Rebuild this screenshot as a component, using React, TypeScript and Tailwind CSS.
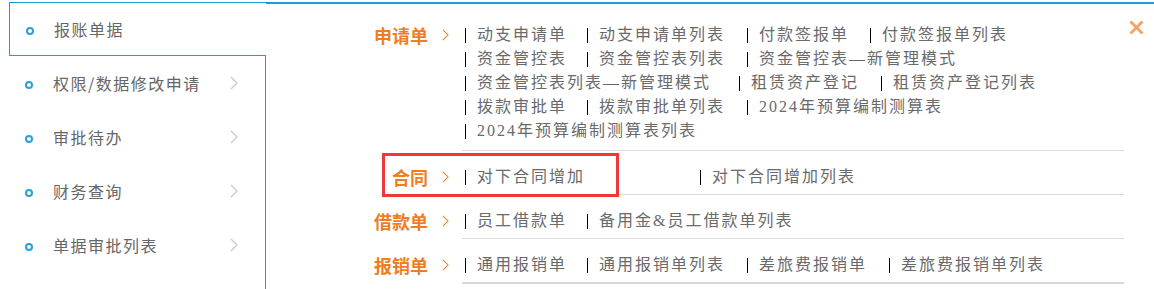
import React from "react";

const BLUE = "#1f9dd6";

const sideItems = ["报账单据", "权限/数据修改申请", "审批待办", "财务查询", "单据审批列表"];

type Section = { label: string; rows: { text: string; mr?: number }[][] };

const sections: Section[] = [
  {
    label: "申请单",
    rows: [
      [{ text: "动支申请单" }, { text: "动支申请单列表", mr: 22 }, { text: "付款签报单", mr: 21 }, { text: "付款签报单列表" }],
      [{ text: "资金管控表" }, { text: "资金管控表列表", mr: 22 }, { text: "资金管控表—新管理模式" }],
      [{ text: "资金管控表列表—新管理模式", mr: 28 }, { text: "租赁资产登记", mr: 22 }, { text: "租赁资产登记列表" }],
      [{ text: "拨款审批单" }, { text: "拨款审批单列表", mr: 22 }, { text: "2024年预算编制测算表" }],
      [{ text: "2024年预算编制测算表列表" }],
    ],
  },
  {
    label: "合同",
    rows: [[{ text: "对下合同增加", mr: 115 }, { text: "对下合同增加列表" }]],
  },
  {
    label: "借款单",
    rows: [[{ text: "员工借款单" }, { text: "备用金&员工借款单列表" }]],
  },
  {
    label: "报销单",
    rows: [[{ text: "通用报销单" }, { text: "通用报销单列表", mr: 22 }, { text: "差旅费报销单", mr: 22 }, { text: "差旅费报销单列表" }]],
  },
];

function Chevron({ color, className }: { color: string; className?: string }) {
  return (
    <svg width="8" height="14" viewBox="0 0 8 14" className={className}>
      <polyline points="1,1 7,7 1,13" fill="none" stroke={color} strokeWidth="1.2" />
    </svg>
  );
}

function Dot() {
  return <span className="block h-[8px] w-[8px] rounded-full border-[2.5px] border-[#2a9fd6] bg-white" />;
}

function SideItem({ text, active }: { text: string; active?: boolean }) {
  return (
    <div className="flex h-[54px] items-center">
      <div className="ml-[16px] mt-[3px]">
        <Dot />
      </div>
      <span className="ml-[20px] text-[16px] tracking-[1.5px] text-[#666]">{text}</span>
      {!active && <Chevron color="#c8c8c8" className="ml-auto mr-[27px]" />}
    </div>
  );
}

export default function App() {
  return (
    <div
      className="relative h-[289px] w-[1154px] overflow-hidden bg-white pt-[2px] pl-[9px]"
      style={{ fontFamily: '"Noto Sans CJK SC", sans-serif' }}
    >
      <div className="flex h-full">
        <aside className="flex w-[257px] flex-col">
          <div className="h-[54px] border border-r-0 border-[#1f9dd6]">
            <div className="-mt-px">
              <SideItem text={sideItems[0]} active />
            </div>
          </div>
          <div className="flex-1 border-r border-[#1f9dd6]">
            {sideItems.slice(1).map((t) => (
              <SideItem key={t} text={t} />
            ))}
          </div>
        </aside>

        <main className="flex-1 border-t-2" style={{ borderColor: BLUE }}>
          {sections.map((s, i) => (
            <div key={s.label} className="flex">
              <div
                className={`flex w-[196px] shrink-0 items-start justify-end pr-[13px] ${
                  i === 0 ? "pt-[19px]" : "pt-[14px]"
                }`}
              >
                <div className="flex h-[24px] items-center">
                  <span className="text-[18px] leading-none font-bold text-[#f07d1f]">{s.label}</span>
                  <Chevron color="#f07d1f" className="ml-[14px] h-[12px] w-[7px]" />
                </div>
              </div>
              <div
                className={`mr-[30px] flex-1 ${
                  i === 0 ? "pt-[19px] pb-[7px]" : "pt-[14px] pb-[5px]"
                } ${i === sections.length - 1 ? "border-b-2 border-[#d9d9d9]" : "border-b border-[#dadada]"}`}
              >
                {s.rows.map((row, ri) => (
                  <div key={ri} className="flex h-[24px] items-center pl-[3px]">
                    {row.map((it) => (
                      <span
                        key={it.text}
                        className="flex items-center"
                        style={{ marginRight: it.mr ?? 20 }}
                      >
                        <span className="h-[15px] w-px bg-black" />
                        <span
                          className="ml-[11px] text-[16px] leading-none tracking-[2px] text-[#6a6a6a]"
                          style={{ fontFamily: '"Liberation Serif", "Noto Sans CJK SC", serif' }}
                        >
                          {it.text}
                        </span>
                      </span>
                    ))}
                  </div>
                ))}
              </div>
            </div>
          ))}
        </main>
      </div>

      <svg className="absolute left-[1129px] top-[20px]" width="15" height="15" viewBox="0 0 15 15">
        <path d="M1.5 1.5 L13.5 13.5 M13.5 1.5 L1.5 13.5" stroke="#f5a465" strokeWidth="3" />
      </svg>

      <div className="pointer-events-none absolute left-[382px] top-[153px] h-[44px] w-[237px] border-[3px] border-[#f0383a]" />
    </div>
  );
}
